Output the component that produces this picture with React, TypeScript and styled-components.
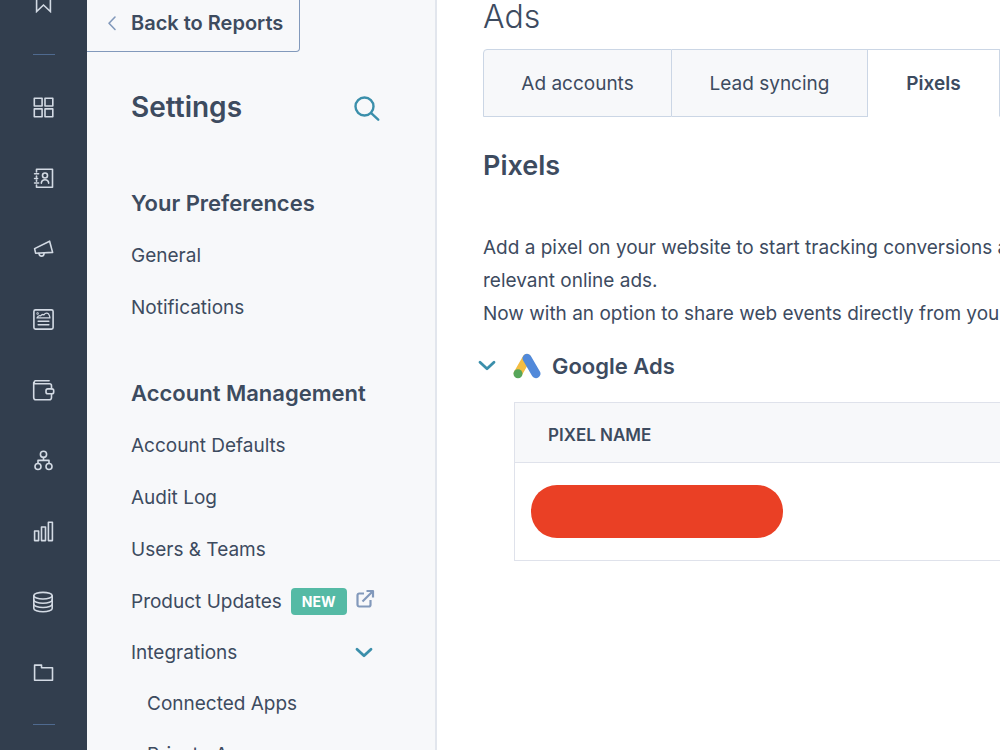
import React, { useState } from "react";
import styled, { createGlobalStyle, css } from "styled-components";

const color = {
  rail: "#323e4e",
  railIcon: "#d3dae4",
  railRule: "#4f6a8f",
  panel: "#f7f8fa",
  panelEdge: "#e2e6ed",
  text: "#3d4b5f",
  slate: "#8299bb",
  teal: "#3b8fab",
  green: "#55baa5",
  tabLine: "#cbd6e5",
  tableLine: "#dfe2eb",
  red: "#ea4025",
};

const GlobalStyle = createGlobalStyle`
  *, *::before, *::after { box-sizing: border-box; }
  body {
    margin: 0;
    background: #fff;
    color: ${color.text};
    font-family: Inter, "Open Sans", "Liberation Sans", sans-serif;
    font-size: 19px;
  }
  h1, h2, h3, p, ul { margin: 0; padding: 0; }
  ul { list-style: none; }
  a { color: inherit; text-decoration: none; }
  button { font: inherit; color: inherit; background: none; border: 0; padding: 0; cursor: pointer; }
  svg { display: block; flex: none; }
`;

const Page = styled.div`
  display: flex;
  height: 100vh;
  overflow: hidden;
`;

/* Icon rail */

const Rail = styled.nav`
  flex: none;
  display: flex;
  flex-direction: column;
  align-items: center;
  width: 87px;
  padding-bottom: 25px;
  background: ${color.rail};
`;

const Bookmark = styled.a`
  height: 54px;
  margin-top: -10px;
`;

const RailRule = styled.hr`
  flex: none;
  width: 22px;
  height: 1px;
  margin: 10px 0 17px;
  border: 0;
  background: ${color.railRule};
  &:last-child { margin: 16px 0 0; }
`;

const RailList = styled.ul`
  flex: 1;
  display: flex;
  flex-direction: column;
`;

const RailItem = styled.li`
  flex: 1;
  display: flex;
  align-items: center;
`;

const RailSvg = styled.svg`
  width: 23px;
  height: 23px;
  fill: none;
  stroke: ${color.railIcon};
  stroke-width: 1.6;
  stroke-linejoin: round;
  stroke-linecap: round;
`;

const railIcons: { label: string; art: React.ReactNode }[] = [
  {
    label: "Workspaces",
    art: (
      <>
        <rect x="2.3" y="2.2" width="7.8" height="7.8" />
        <rect x="13" y="2.2" width="7.8" height="7.8" />
        <rect x="2.3" y="12.9" width="7.8" height="7.8" />
        <rect x="13" y="12.9" width="7.8" height="7.8" />
      </>
    ),
  },
  {
    label: "Contacts",
    art: (
      <>
        <path d="M4.5 5V2.2h16v18h-16V18M4.5 9v1.2M4.5 13v1.2" />
        <path d="M2.6 6.8h4M2.6 11.5h3M2.6 16h4" />
        <circle cx="13" cy="8.5" r="2.5" />
        <path d="M9.3 16.2c.3-2.4 1.7-3.4 3.7-3.4s3.4 1 3.7 3.4" />
      </>
    ),
  },
  {
    label: "Marketing",
    art: (
      <>
        <path d="M2.6 11.6 17.6 4.2l3 11.2-17 .8z" />
        <path d="M6.9 16.2c.2 1.9 1.2 2.9 2.7 2.9s2.5-1.1 2.5-3.1" />
      </>
    ),
  },
  {
    label: "Content",
    art: (
      <>
        <rect x="1.9" y="1.9" width="19.2" height="19.2" rx="1.6" />
        <path d="M6.2 16.8h10.6M6.2 13.3h10.6" />
        <path d="M5 9.9c.8-1.9 2-2.5 3.6-2.1 1-1.3 2.200-1.500 3.300-1 1.800-2.600 4.700-1.900 5.300.2.300.9.7 1.900.7 2.900z" strokeWidth="1.3" />
        <circle cx="5.600" cy="5.500" r=".4" />
      </>
    ),
  },
  {
    label: "Commerce",
    art: (
      <>
        <path d="M19.5 9.800V6.700a2 2 0 0 0-2-2H3.300a1.500 1.500 0 0 1 0-2.900h13.800M1.700 3.500v14.900a2.300 2.300 0 0 0 2.300 2.300h13.200a2.300 2.300 0 0 0 2.300-2.300v-3.500" />
        <rect x="14" y="9.900" width="7.700" height="4.800" rx="1.800" />
      </>
    ),
  },
  {
    label: "Automation",
    art: (
      <>
        <circle cx="11.500" cy="5.300" r="3.100" />
        <circle cx="6" cy="17.500" r="3" />
        <circle cx="17" cy="17.500" r="3" />
        <path d="M11.500 8.500v2.900M6 14.300v-2.900h11v2.900" />
      </>
    ),
  },
  {
    label: "Reporting",
    art: (
      <>
        <rect x="2.600" y="11" width="4" height="9.600" />
        <rect x="9.500" y="7" width="4" height="13.600" />
        <rect x="16.400" y="2.300" width="4" height="18.300" />
      </>
    ),
  },
  {
    label: "Data management",
    art: (
      <>
        <ellipse cx="11" cy="4.700" rx="9.200" ry="3.300" />
        <path d="M1.800 4.700v12.800c0 1.800 4.100 3.300 9.200 3.300s9.200-1.500 9.200-3.300V4.700" />
        <path d="M1.800 8.900c0 1.800 4.100 3.300 9.200 3.300s9.200-1.500 9.200-3.300M1.800 13.200c0 1.800 4.100 3.300 9.200 3.300s9.200-1.500 9.200-3.300" />
      </>
    ),
  },
  {
    label: "Library",
    art: <path d="M2.600 4.100h6.900v2.700h11v12.400H2.600z" />,
  },
];

/* Settings panel */

const Panel = styled.aside`
  flex: none;
  width: 350px;
  background: ${color.panel};
  border-right: 2px solid ${color.panelEdge};
  overflow: hidden;
`;

const BackButton = styled.button`
  display: flex;
  align-items: center;
  gap: 14px;
  height: 58px;
  margin-top: -6px;
  padding: 0 16px 0 20px;
  border: 1px solid ${color.slate};
  border-left: 0;
  border-radius: 0 4px 4px 0;
  font-size: 20px;
  font-weight: 600;
  white-space: nowrap;
`;

const PanelHeader = styled.header`
  display: flex;
  align-items: center;
  justify-content: space-between;
  height: 50px;
  margin: 30px 54px 45px 44px;
`;

const PanelTitle = styled.h1`
  font-size: 28px;
  font-weight: 600;
  line-height: 32px;
`;

const Section = styled.section`
  padding: 0 60px 0 44px;
  & + & { margin-top: 34px; }
`;

const SectionTitle = styled.h2`
  font-size: 22px;
  font-weight: 600;
  line-height: 52px;
  white-space: nowrap;
`;

const rowStyle = css`
  display: flex;
  align-items: center;
  width: 100%;
  height: 52px;
  white-space: nowrap;
`;

const NavLink = styled.a`
  ${rowStyle}
`;

const NavToggle = styled.button`
  ${rowStyle}
  height: 51px;
  justify-content: space-between;
  padding-right: 2px;
`;

const SubList = styled.ul`
  padding-left: 16px;
  ${NavLink} { height: 51px; }
`;

const Badge = styled.span`
  margin: 0 9px;
  padding: 0 11px;
  border-radius: 4px;
  background: ${color.green};
  color: #fff;
  font-size: 14px;
  font-weight: 700;
  line-height: 27px;
`;

/* Main area */

const Main = styled.main`
  flex: 1;
  min-width: 0;
  padding-left: 46px;
  overflow: hidden;
`;

const PageTitle = styled.h1`
  height: 49px;
  font-size: 32px;
  font-weight: 300;
  line-height: 33px;
`;

const Tabs = styled.div`
  display: flex;
  height: 68px;
`;

const Tab = styled.button<{ $active?: boolean; $width: number }>`
  flex: none;
  width: ${(p) => p.$width}px;
  border: 1px solid ${color.tabLine};
  border-left-width: 0;
  background: ${color.panel};
  white-space: nowrap;
  &:first-child {
    border-left-width: 1px;
    border-top-left-radius: 4px;
  }
  ${(p) =>
    p.$active &&
    css`
      background: #fff;
      border-bottom-color: #fff;
      font-weight: 600;
    `}
`;

const Heading = styled.h2`
  margin: 33px 0 49px;
  font-size: 27px;
  font-weight: 600;
  line-height: 32px;
`;

const Intro = styled.p`
  line-height: 33px;
  white-space: nowrap;
`;

const Network = styled.button`
  display: flex;
  align-items: center;
  height: 32px;
  margin: 20px 0 20px -5px;
  font-size: 22px;
  font-weight: 600;
`;

const NetworkName = styled.span`
  margin-left: 11px;
`;

const TableWrap = styled.div`
  padding-left: 31px;
`;

const Table = styled.table`
  width: 100%;
  border: 1px solid ${color.tableLine};
  border-right: 0;
  border-spacing: 0;
`;

const HeadCell = styled.th`
  height: 60px;
  padding: 5px 33px 0;
  border-bottom: 1px solid ${color.tableLine};
  background: ${color.panel};
  font-size: 17px;
  font-weight: 600;
  text-align: left;
`;

const Cell = styled.td`
  height: 97px;
  padding: 0 16px;
`;

const Redacted = styled.div`
  width: 252px;
  height: 53px;
  border-radius: 26px;
  background: ${color.red};
`;

const Chevron = ({ gap = 0 }: { gap?: number }) => (
  <svg width={18 + gap} height="12" viewBox={`0 0 ${18 + gap} 12`} fill="none" stroke={color.teal} strokeWidth="2.8" strokeLinecap="round" strokeLinejoin="round">
    <path d="M2 2.200 9 8.800l7-6.600" />
  </svg>
);

const GoogleAdsLogo = () => (
  <svg width="28" height="26" viewBox="0 0 28 26" fill="none" strokeLinecap="round">
    <path d="M5 20.300 13.800 5.200" stroke="#f4bd42" strokeWidth="8.600" />
    <path d="m14 5.300 9 15.400" stroke="#5189da" strokeWidth="9" />
    <circle cx="5" cy="20.700" r="4.500" fill="#57a65a" />
  </svg>
);

export default function App() {
  const [open, setOpen] = useState(true);
  const [showTable, setShowTable] = useState(true);

  return (
    <Page>
      <GlobalStyle />
      <Rail aria-label="Main navigation">
        <Bookmark href="#bookmarks" aria-label="Bookmarks">
          <RailSvg viewBox="0 0 23 23">
            <path d="M4.600 1v20.500l6.900-6.500 6.900 6.500V1z" strokeLinejoin="miter" />
          </RailSvg>
        </Bookmark>
        <RailRule />
        <RailList>
          {railIcons.map((icon) => (
            <RailItem key={icon.label}>
              <a href="#nav" aria-label={icon.label}>
                <RailSvg viewBox="0 0 23 23">{icon.art}</RailSvg>
              </a>
            </RailItem>
          ))}
        </RailList>
        <RailRule />
      </Rail>

      <Panel>
        <BackButton type="button">
          <svg width="10" height="16" viewBox="0 0 10 16" fill="none" stroke={color.slate} strokeWidth="1.6" strokeLinecap="round" strokeLinejoin="round">
            <path d="M8 2 2 8.200 8 14.500" />
          </svg>
          Back to Reports
        </BackButton>
        <PanelHeader>
          <PanelTitle>Settings</PanelTitle>
          <button type="button" aria-label="Search settings">
            <svg width="28" height="28" viewBox="0 0 28 28" fill="none" stroke={color.teal} strokeWidth="2.4" strokeLinecap="round">
              <circle cx="11.500" cy="13.500" r="9" />
              <path d="m18.200 20.200 7 6.500" />
            </svg>
          </button>
        </PanelHeader>

        <Section>
          <SectionTitle>Your Preferences</SectionTitle>
          <ul>
            <li><NavLink href="#general">General</NavLink></li>
            <li><NavLink href="#notifications">Notifications</NavLink></li>
          </ul>
        </Section>

        <Section>
          <SectionTitle>Account Management</SectionTitle>
          <ul>
            <li><NavLink href="#defaults">Account Defaults</NavLink></li>
            <li><NavLink href="#audit">Audit Log</NavLink></li>
            <li><NavLink href="#users">Users &amp; Teams</NavLink></li>
            <li>
              <NavLink href="#updates">
                Product Updates
                <Badge>NEW</Badge>
                <svg width="19" height="24" viewBox="0 0 19 24" fill="none" stroke={color.slate} strokeWidth="2.2" strokeLinejoin="round">
                  <path d="M8 4.500H3.200A1.700 1.700 0 0 0 1.500 6.200v9.600a1.700 1.700 0 0 0 1.700 1.700h9.600a1.700 1.700 0 0 0 1.700-1.700V11" />
                  <path d="M6.500 12.500 16.500 2.500M10.500 2h6.500v6.500" />
                </svg>
              </NavLink>
            </li>
            <li>
              <NavToggle type="button" aria-expanded={open} onClick={() => setOpen(!open)}>
                Integrations
                <Chevron />
              </NavToggle>
              {open && (
                <SubList>
                  <li><NavLink href="#connected">Connected Apps</NavLink></li>
                  <li><NavLink href="#private">Private Apps</NavLink></li>
                </SubList>
              )}
            </li>
          </ul>
        </Section>
      </Panel>

      <Main>
        <PageTitle>Ads</PageTitle>
        <Tabs role="tablist">
          <Tab type="button" role="tab" aria-selected={false} $width={189}>Ad accounts</Tab>
          <Tab type="button" role="tab" aria-selected={false} $width={196}>Lead syncing</Tab>
          <Tab type="button" role="tab" aria-selected $active $width={132}>Pixels</Tab>
        </Tabs>
        <Heading>Pixels</Heading>
        <Intro>
          Add a pixel on your website to start tracking conversions and
          <br />
          relevant online ads.
          <br />
          Now with an option to share web events directly from your
        </Intro>
        <Network type="button" aria-expanded={showTable} onClick={() => setShowTable(!showTable)}>
          <Chevron gap={17} />
          <GoogleAdsLogo />
          <NetworkName>Google Ads</NetworkName>
        </Network>
        {showTable && (
          <TableWrap>
            <Table>
              <thead>
                <tr><HeadCell scope="col">PIXEL NAME</HeadCell></tr>
              </thead>
              <tbody>
                <tr><Cell><Redacted /></Cell></tr>
              </tbody>
            </Table>
          </TableWrap>
        )}
      </Main>
    </Page>
  );
}
